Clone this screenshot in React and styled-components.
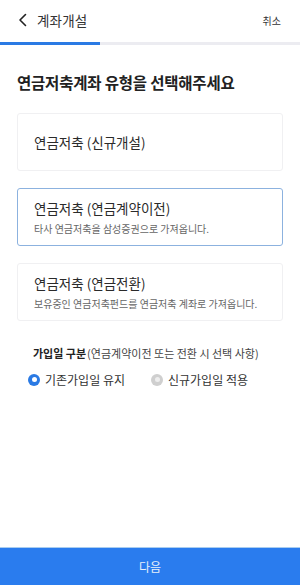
import React, { useState } from 'react';
import styled, { createGlobalStyle } from 'styled-components';

const GlobalStyle = createGlobalStyle`
  html, body {
    margin: 0;
    padding: 0;
    background: #fff;
  }
  body {
    font-family: "Noto Sans CJK KR", "Noto Sans", sans-serif;
    color: #222;
  }
`;

const options = [
  { id: 'new', title: '연금저축 (신규개설)' },
  { id: 'move', title: '연금저축 (연금계약이전)', desc: '타사 연금저축을 삼성증권으로 가져옵니다.' },
  { id: 'switch', title: '연금저축 (연금전환)', desc: '보유중인 연금저축펀드를 연금저축 계좌로 가져옵니다.' },
];

const App = () => {
  const [selected, setSelected] = useState('move');
  const [joinDate, setJoinDate] = useState('keep');

  return (
    <>
      <GlobalStyle />
      <Page>
        <Header>
          <BackButton>
            <svg width="12" height="14" viewBox="0 0 12 14">
              <path d="M8.5 1.5 L3 7 L8.5 12.5" fill="none" stroke="#222" strokeWidth="1.6" strokeLinecap="round" strokeLinejoin="round" />
            </svg>
          </BackButton>
          <Title>계좌개설</Title>
          <Cancel>취소</Cancel>
        </Header>
        <Progress>
          <ProgressFill style={{ width: '33.3%' }} />
        </Progress>

        <Content>
          <Heading>연금저축계좌 유형을 선택해주세요</Heading>
          <CardList>
            {options.map((o) => (
              <Card key={o.id} $active={selected === o.id} onClick={() => setSelected(o.id)}>
                <CardTitle>{o.title}</CardTitle>
                {o.desc && <CardDesc>{o.desc}</CardDesc>}
              </Card>
            ))}
          </CardList>

          <JoinSection>
            <JoinLabel>
              <b>가입일 구분</b>(연금계약이전 또는 전환 시 선택 사항)
            </JoinLabel>
            <RadioRow>
              <RadioItem onClick={() => setJoinDate('keep')}>
                <RadioDot $checked={joinDate === 'keep'} />
                기존가입일 유지
              </RadioItem>
              <RadioItem onClick={() => setJoinDate('new')}>
                <RadioDot $checked={joinDate === 'new'} />
                신규가입일 적용
              </RadioItem>
            </RadioRow>
          </JoinSection>
        </Content>

        <NextButton>다음</NextButton>
      </Page>
    </>
  );
};

const Page = styled.div`
  width: 300px;
  height: 585px;
  display: flex;
  flex-direction: column;
  background: #fff;
  overflow: hidden;
`;

const Header = styled.div`
  height: 40px;
  display: flex;
  align-items: center;
  padding: 0 14px 0 15px;
  flex-shrink: 0;
`;

const BackButton = styled.div`
  width: 16px;
  height: 16px;
  display: flex;
  align-items: center;
  justify-content: center;
  margin-right: 6px;
`;

const Title = styled.div`
  font-size: 13.5px;
  color: #333;
  letter-spacing: 0.2px;
  flex: 1;
  margin-top: -1px;
`;

const Cancel = styled.div`
  font-size: 10px;
  color: #333;
  margin-right: 5px;
`;

const Progress = styled.div`
  height: 3px;
  margin-top: 2px;
  background: #ececf1;
  flex-shrink: 0;
`;

const ProgressFill = styled.div`
  height: 100%;
  background: #2a7ae4;
`;

const Content = styled.div`
  flex: 1;
  padding: 26px 17px 0;
`;

const Heading = styled.div`
  font-size: 15.5px;
  font-weight: 700;
  color: #222;
  letter-spacing: -0.2px;
  line-height: 22px;
`;

const CardList = styled.div`
  display: flex;
  flex-direction: column;
  gap: 17px;
  margin-top: 20px;
`;

const Card = styled.div`
  height: 58px;
  box-sizing: border-box;
  border: 1px solid ${(p) => (p.$active ? '#8cb2df' : '#f0f0f2')};
  border-radius: 3px;
  padding: 0 16px;
  display: flex;
  flex-direction: column;
  justify-content: center;
  gap: 5px;
  cursor: pointer;
`;

const CardTitle = styled.div`
  font-size: 13.5px;
  color: #2a2a2a;
  line-height: 18px;
`;

const CardDesc = styled.div`
  font-size: 10px;
  color: #666;
  line-height: 14px;
`;

const JoinSection = styled.div`
  margin-top: 24px;
  padding-left: 16px;
`;

const JoinLabel = styled.div`
  font-size: 11px;
  color: #444;
  line-height: 16px;
  b {
    color: #222;
    font-weight: 700;
    margin-right: 1px;
  }
`;

const RadioRow = styled.div`
  display: flex;
  margin-top: 10px;
  margin-left: -5px;
`;

const RadioItem = styled.div`
  display: flex;
  align-items: center;
  gap: 5px;
  font-size: 12px;
  color: #333;
  width: 123px;
  cursor: pointer;
`;

const RadioDot = styled.span`
  width: 12px;
  height: 12px;
  border-radius: 50%;
  box-sizing: border-box;
  background: ${(p) => (p.$checked ? '#2a7ae4' : '#cfcfcf')};
  display: flex;
  align-items: center;
  justify-content: center;
  &::after {
    content: '';
    width: 5px;
    height: 5px;
    border-radius: 50%;
    background: ${(p) => (p.$checked ? '#fff' : '#eee')};
  }
`;

const NextButton = styled.div`
  height: 37px;
  flex-shrink: 0;
  background: #2a7cee;
  color: #e8f0fb;
  font-size: 12px;
  display: flex;
  align-items: center;
  justify-content: center;
  border-top: 1px solid #a9cdf0;
`;

export default App;
